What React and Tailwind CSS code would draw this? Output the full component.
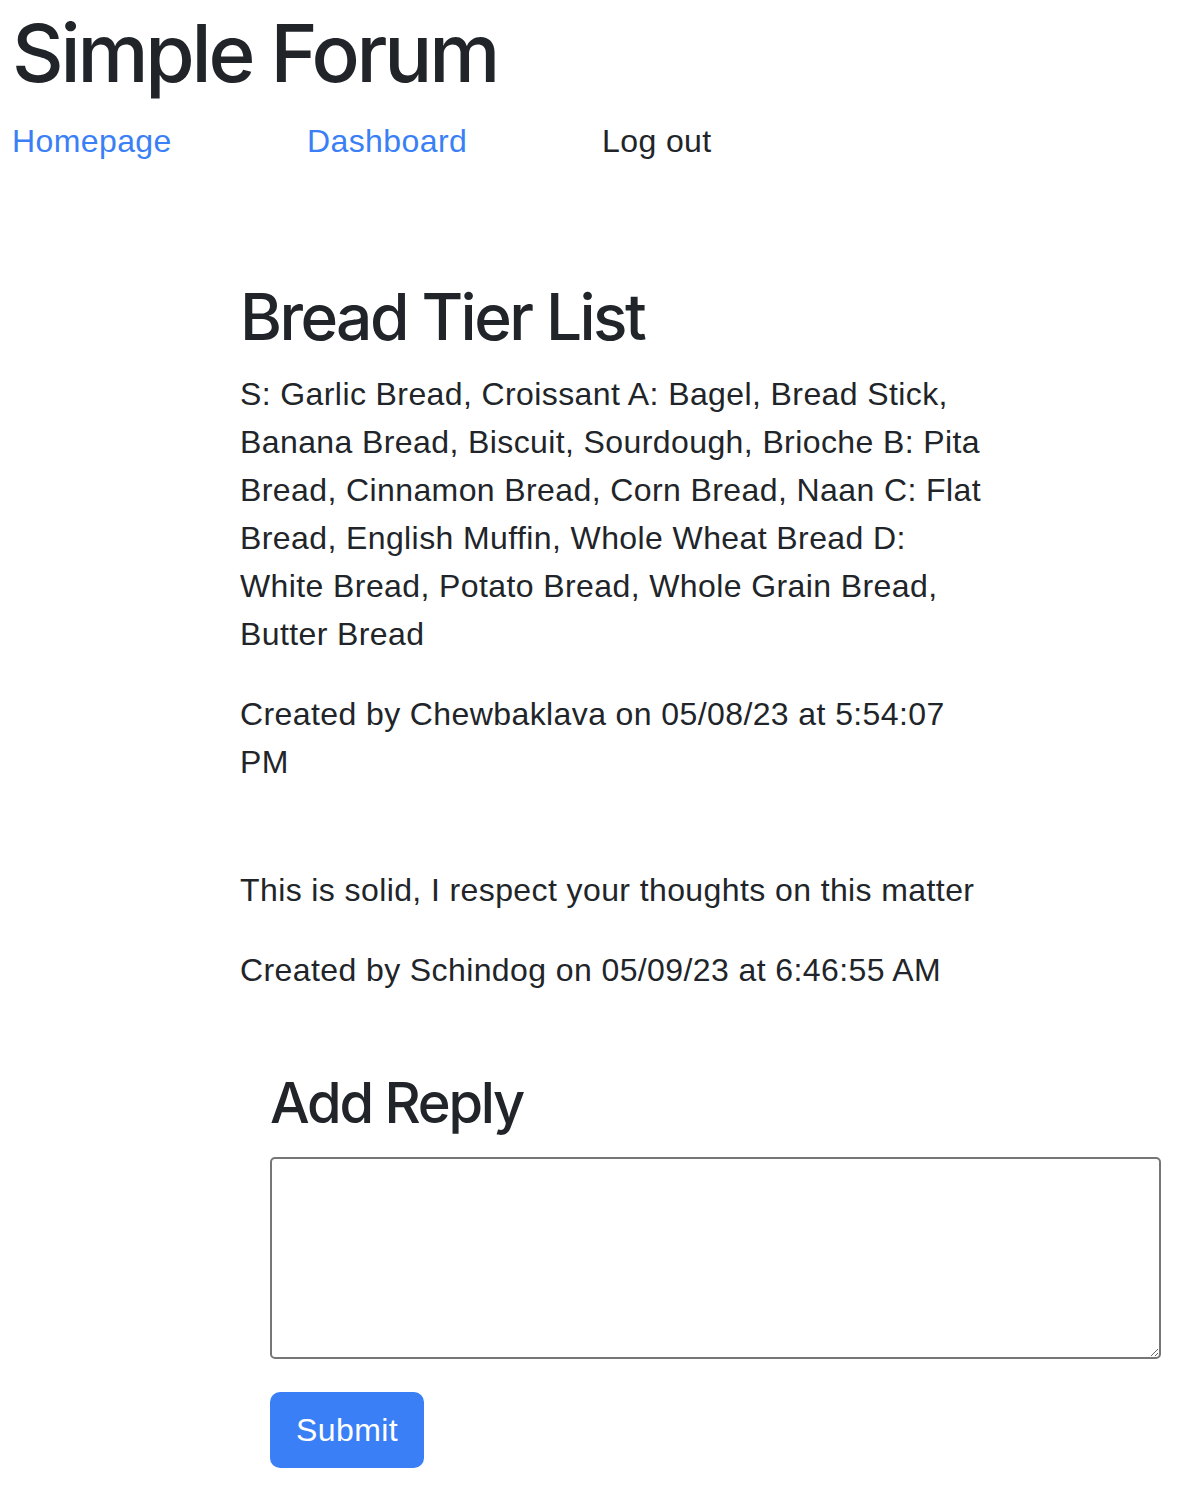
import React from 'react';

const font = { fontFamily: '"Liberation Sans", Arial, sans-serif' };
const headFont = { fontFamily: 'Inter, "Liberation Sans", sans-serif' };

const Nav = () => (
    <nav className="flex mt-[16px] pl-[12px] text-[32px] leading-[48px]">
        <a href="#" className="w-[295px] text-[#3a7ff6]">Homepage</a>
        <a href="#" className="w-[295px] text-[#3a7ff6]">Dashboard</a>
        <a href="#" className="w-[295px] text-[#212529]">Log out</a>
    </nav>
);

const Post = () => (
    <section className="ml-[240px] w-[745px] mt-[114px]">
        <h2 className="text-[64px] leading-[76.8px] font-medium tracking-[-0.04em] mb-[14px]" style={headFont}>Bread Tier List</h2>
        <p className="mb-[32px]">
            S: Garlic Bread, Croissant A: Bagel, Bread Stick, Banana Bread, Biscuit, Sourdough, Brioche B: Pita Bread, Cinnamon Bread, Corn Bread, Naan C: Flat Bread, English Muffin, Whole Wheat Bread D: White Bread, Potato Bread, Whole Grain Bread, Butter Bread
        </p>
        <p>Created by Chewbaklava on 05/08/23 at 5:54:07 PM</p>

        <div className="mt-[80px]">
            <p className="mb-[32px]">This is solid, I respect your thoughts on this matter</p>
            <p>Created by Schindog on 05/09/23 at 6:46:55 AM</p>
        </div>
    </section>
);

const ReplyForm = () => (
    <form className="ml-[270px] mt-[76px]" onSubmit={e => e.preventDefault()}>
        <h3 className="text-[56px] leading-[67.2px] font-medium tracking-[-0.04em] mb-[20px]" style={headFont}>Add Reply</h3>
        <textarea className="block w-[891px] h-[202px] border-2 border-[#767676] rounded-[5px] bg-white"></textarea>
        <button type="submit" className="mt-[33px] w-[154px] h-[76px] rounded-[10px] bg-[#3a7ff6] text-white text-[32px] leading-[48px]">
            Submit
        </button>
    </form>
);

const App = () => {
    return (
        <div className="min-h-[1502px] bg-white text-[#212529] text-[32px] leading-[48px] tracking-[0.4px]" style={font}>
            <h1 className="pl-[12px] pt-[5px] text-[80px] leading-[96px] font-medium tracking-[-0.04em]" style={headFont}>Simple Forum</h1>
            <Nav />
            <Post />
            <ReplyForm />
        </div>
    );
}

export default App;
